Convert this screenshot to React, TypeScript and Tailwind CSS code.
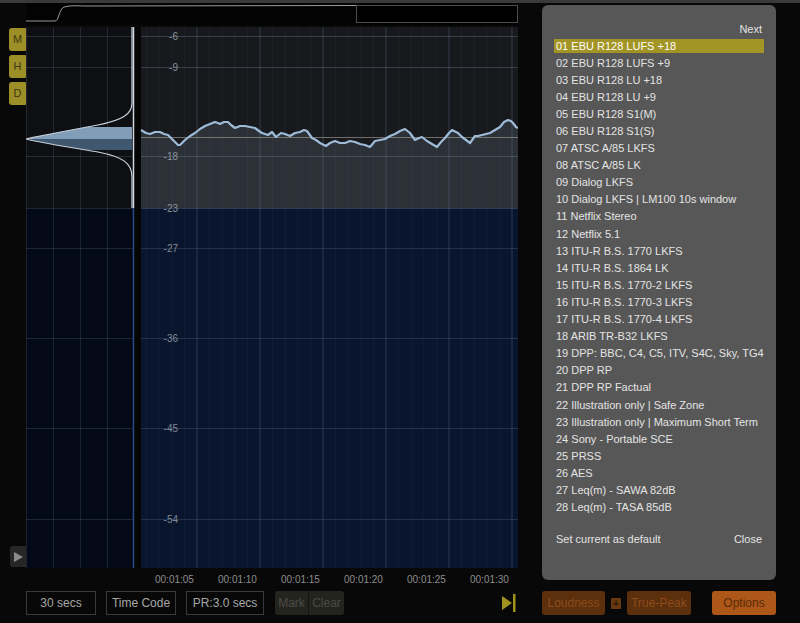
const presets = [
  '01 EBU R128 LUFS +18',
  '02 EBU R128 LUFS +9',
  '03 EBU R128 LU +18',
  '04 EBU R128 LU +9',
  '05 EBU R128 S1(M)',
  '06 EBU R128 S1(S)',
  '07 ATSC A/85 LKFS',
  '08 ATSC A/85 LK',
  '09 Dialog LKFS',
  '10 Dialog LKFS | LM100 10s window',
  '11 Netflix Stereo',
  '12 Netflix 5.1',
  '13 ITU-R B.S. 1770 LKFS',
  '14 ITU-R B.S. 1864 LK',
  '15 ITU-R B.S. 1770-2 LKFS',
  '16 ITU-R B.S. 1770-3 LKFS',
  '17 ITU-R B.S. 1770-4 LKFS',
  '18 ARIB TR-B32 LKFS',
  '19 DPP: BBC, C4, C5, ITV, S4C, Sky, TG4',
  '20 DPP RP',
  '21 DPP RP Factual',
  '22 Illustration only | Safe Zone',
  '23 Illustration only | Maximum Short Term',
  '24 Sony - Portable SCE',
  '25 PRSS',
  '26 AES',
  '27 Leq(m) - SAWA 82dB',
  '28 Leq(m) - TASA 85dB',
]

const times = ['00:01:05', '00:01:10', '00:01:15', '00:01:20', '00:01:25', '00:01:30']

// level grid: [label, y in plot coords]
const levels: [string, number][] = [
  ['-6', 9],
  ['-9', 40],
  ['-18', 129],
  ['-23', 181],
  ['-27', 221],
  ['-36', 311],
  ['-45', 401],
  ['-54', 492],
]

const curve: [number, number][] = [
  [115, 103], [120, 106], [124, 107], [129, 105], [134, 105], [138, 107], [142, 108], [146, 112],
  [149, 115], [152, 118], [154, 118], [157, 115], [159, 113], [164, 109], [169, 106], [174, 102],
  [179, 99], [184, 97], [189, 95], [192, 96], [194, 97], [198, 95], [202, 95], [205, 98], [209, 101],
  [214, 99], [219, 99], [224, 100], [229, 101], [233, 104], [236, 106], [239, 107], [242, 108],
  [246, 105], [250, 110], [255, 106], [259, 107], [264, 109], [269, 106], [274, 105], [278, 103],
  [281, 104], [286, 111], [290, 113], [294, 116], [300, 119], [304, 116], [309, 114], [314, 116],
  [319, 116], [324, 114], [329, 115], [334, 117], [339, 118], [344, 120], [349, 114], [354, 113],
  [359, 112], [364, 109], [369, 107], [374, 104], [379, 102], [384, 106], [389, 113], [393, 111],
  [396, 110], [401, 114], [406, 117], [411, 120], [415, 115], [419, 111], [423, 106], [426, 103],
  [432, 106], [436, 110], [440, 113], [444, 116], [449, 109], [452, 109], [456, 108], [460, 107],
  [464, 106], [469, 103], [474, 100], [478, 95], [482, 93], [485, 94], [487, 96], [490, 100], [492, 101],
]

const curveLine = curve.map(([x, y]) => `${x},${y}`).join(' ')
const curveFill = `115,181 ${curveLine} 492,181`

const majors = [171, 234, 297, 360, 423, 486]
const minors = Array.from({ length: 30 }, (_, i) => 120.6 + i * 12.6).filter((x) => x < 492)

const bell =
  'M106,76 C106,87 97,93 72,98 C42,104 16,108 0,112 C16,116 42,120 72,125 C97,130 106,136 106,150'

function LoudnessPlot() {
  return (
    <svg width="492" height="541" viewBox="0 0 492 541" className="block">
      {/* histogram side */}
      <rect x="0" y="0" width="107" height="181" fill="#0e0f12" />
      <rect x="0" y="181" width="107" height="360" fill="#030916" />
      {/* gap */}
      <rect x="107" y="0" width="8" height="541" fill="#050505" />
      {/* history side */}
      <rect x="115" y="0" width="377" height="181" fill="#17191d" />
      <polygon points={curveFill} fill="#2c3037" />
      <rect x="115" y="181" width="377" height="360" fill="#08152c" />

      {minors.map((x) => (
        <line key={x} x1={x} y1="0" x2={x} y2="541" stroke="#7890b0" strokeOpacity="0.08" />
      ))}
      {majors.map((x) => (
        <line key={x} x1={x} y1="0" x2={x} y2="541" stroke="#8aa0c0" strokeOpacity="0.22" />
      ))}
      {[0, 27, 54, 81].map((x) => (
        <line key={x} x1={x + 0.5} y1="0" x2={x + 0.5} y2="541" stroke="#8a98b0" strokeOpacity="0.18" />
      ))}
      {levels.map(([, y]) => (
        <g key={y}>
          <line x1="0" y1={y + 0.5} x2="107" y2={y + 0.5} stroke="#8a98b0" strokeOpacity="0.2" />
          <line x1="115" y1={y + 0.5} x2="492" y2={y + 0.5} stroke="#8aa0c0" strokeOpacity={y > 181 ? 0.2 : 0.28} />
        </g>
      ))}

      {/* target line */}
      <line x1="115" y1="110.5" x2="492" y2="110.5" stroke="#a09a90" strokeOpacity="0.65" />

      {/* distribution */}
      <defs>
        <clipPath id="bandTop">
          <rect x="0" y="100" width="107" height="12" />
        </clipPath>
        <clipPath id="bandBottom">
          <rect x="0" y="112" width="107" height="11" />
        </clipPath>
      </defs>
      <path d={`${bell} Z`} fill="#819db8" clipPath="url(#bandTop)" />
      <path d={`${bell} Z`} fill="#405770" clipPath="url(#bandBottom)" />
      <path d={`M106,0 L${bell.slice(1)} L106,181`} fill="none" stroke="#c9d2dc" strokeWidth="1.2" />
      <line x1="107.5" y1="0" x2="107.5" y2="181" stroke="#cfd6de" strokeWidth="1.5" />
      <line x1="107.5" y1="181" x2="107.5" y2="541" stroke="#2a4a86" strokeWidth="1.5" />

      {/* short term history */}
      <polyline points={curveLine} fill="none" stroke="#9ebbd8" strokeWidth="2.2" strokeLinejoin="round" />

      {levels.map(([label, y]) => (
        <text
          key={label}
          x="152"
          y={y + 4}
          textAnchor="end"
          fontSize="10"
          fontFamily="Liberation Sans, Arial, sans-serif"
          fill={y > 181 ? '#7f8a98' : '#8d939b'}
        >
          {label}
        </text>
      ))}
    </svg>
  )
}

function Overview() {
  return (
    <svg width="492" height="24" viewBox="0 0 492 24" className="block">
      <rect x="0" y="0" width="492" height="22" fill="#030303" />
      <path
        d="M0,18 L29,18 C33,18 33,6 38,4 C45,2 52,3 60,3 L330,2.5"
        fill="none"
        stroke="#9a9a9a"
        strokeWidth="1"
      />
      <rect x="330.5" y="2.5" width="161" height="17" fill="#000" stroke="#4c4c4c" />
    </svg>
  )
}

function SideButton({ label }: { label: string }) {
  return (
    <div className="w-[17px] h-[23px] rounded-l-[3px] rounded-r-[1px] bg-[#9d8f28] text-[#3f3810] text-[11px] flex items-center justify-center">
      {label}
    </div>
  )
}

export default function App() {
  return (
    <div className="w-[800px] h-[623px] overflow-hidden bg-[#080808] flex flex-col font-['Liberation_Sans',Arial,sans-serif]">
      <div className="h-[3px] bg-[#3a3a3a]" />
      <div className="flex">
        {/* meter column */}
        <div className="w-[542px] flex flex-col">
          <div className="h-[24px] pl-[26px]">
            <Overview />
          </div>

          <div className="h-[541px] flex">
            <div className="w-[26px] pl-[9px] pt-[1px] pb-[1px] flex flex-col justify-between">
              <div className="flex flex-col gap-[4px]">
                <SideButton label="M" />
                <SideButton label="H" />
                <SideButton label="D" />
              </div>
              <div className="w-[16px] h-[21px] ml-[1px] rounded-l-[3px] bg-[#262626] flex items-center justify-center">
                <svg width="9" height="10" viewBox="0 0 9 10">
                  <polygon points="0,0 9,5 0,10" fill="#8a8a8a" />
                </svg>
              </div>
            </div>
            <LoudnessPlot />
          </div>

          <div className="h-[23px] pl-[155px] flex items-center text-[10px] text-[#8c8c8c]">
            {times.map((t) => (
              <span key={t} className="w-[63px]">
                {t}
              </span>
            ))}
          </div>

          <div className="h-[24px] pl-[26px] flex items-stretch text-[12px] text-[#a6a6a6]">
            <div className="w-[70px] border border-[#3a3a3a] flex items-center justify-center">30 secs</div>
            <div className="w-[70px] ml-[10px] border border-[#3a3a3a] flex items-center justify-center">Time Code</div>
            <div className="w-[78px] ml-[10px] border border-[#3a3a3a] flex items-center justify-center">PR:3.0 secs</div>
            <div className="ml-[11px] flex rounded-[3px] bg-[#24241f] text-[#4c4c44]">
              <div className="w-[34px] flex items-center justify-center border-r border-[#141412]">Mark</div>
              <div className="w-[35px] flex items-center justify-center">Clear</div>
            </div>
            <div className="ml-auto mr-[26px] flex items-center">
              <svg width="14" height="18" viewBox="0 0 14 18">
                <polygon points="0,2 10,9 0,16" fill="#a0921f" />
                <rect x="11" y="0" width="2.5" height="18" fill="#a0921f" />
              </svg>
            </div>
          </div>
        </div>

        {/* preset menu */}
        <div className="w-[234px] flex flex-col">
          <div className="mt-[2px] h-[575px] rounded-[6px] bg-[#575757] px-[12px] pt-[16px] text-[11px] text-[#e4e4e4]">
            <div className="h-[16px] leading-[16px] text-right pr-[2px]">Next</div>
            {presets.map((p, i) => (
              <div key={p} className="h-[17.1px] flex items-center">
                <div
                  className={
                    i === 0
                      ? 'w-full h-[14px] leading-[14px] pl-[2px] bg-[#a39525] text-white whitespace-nowrap'
                      : 'w-full h-[14px] leading-[14px] pl-[2px] whitespace-nowrap'
                  }
                >
                  {p}
                </div>
              </div>
            ))}
            <div className="mt-[15px] h-[17px] flex items-center justify-between px-[2px]">
              <span>Set current as default</span>
              <span>Close</span>
            </div>
          </div>

          <div className="mt-[11px] h-[24px] flex items-stretch text-[12px]">
            <div className="w-[63px] rounded-[3px] bg-[#5c2f0d] text-[#8e4d1b] flex items-center justify-center">
              Loudness
            </div>
            <div className="ml-[6px] self-center w-[10px] h-[11px] rounded-[1px] bg-[#6a3810] text-[#2e1806] text-[11px] leading-[11px] font-bold flex items-center justify-center">
              +
            </div>
            <div className="ml-[6px] w-[64px] rounded-[3px] bg-[#5c2f0d] text-[#8e4d1b] flex items-center justify-center">
              True-Peak
            </div>
            <div className="ml-auto w-[64px] rounded-[3px] bg-[#ad5718] text-[#5a2b0a] flex items-center justify-center">
              Options
            </div>
          </div>
        </div>
      </div>
    </div>
  )
}
